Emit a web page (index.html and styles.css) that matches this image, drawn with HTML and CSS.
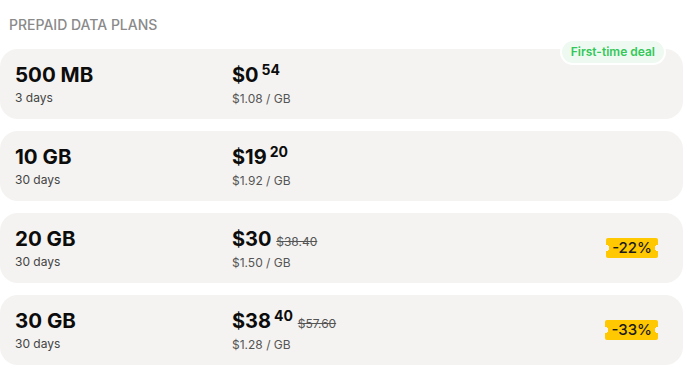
FILE: index.html
```html
<!DOCTYPE html>
<html lang="en">
<head>
  <meta charset="UTF-8">
  <meta name="viewport" content="width=device-width, initial-scale=1.0">
  <title>Prepaid data plans</title>
  <link rel="stylesheet" href="styles.css">
</head>
<body>
  <div class="plans">
    <h2 class="plans-title">Prepaid data plans</h2>

    <div class="plan">
      <div class="plan-size">
        <div class="size">500 MB</div>
        <div class="days">3 days</div>
      </div>
      <div class="plan-price">
        <div class="price">$0<sup>54</sup></div>
        <div class="per-gb">$1.08 / GB</div>
      </div>
      <span class="deal">First-time deal</span>
    </div>

    <div class="plan">
      <div class="plan-size">
        <div class="size">10 GB</div>
        <div class="days">30 days</div>
      </div>
      <div class="plan-price">
        <div class="price">$19<sup>20</sup></div>
        <div class="per-gb">$1.92 / GB</div>
      </div>
    </div>

    <div class="plan">
      <div class="plan-size">
        <div class="size">20 GB</div>
        <div class="days">30 days</div>
      </div>
      <div class="plan-price">
        <div class="price">$30 <s>$38.40</s></div>
        <div class="per-gb">$1.50 / GB</div>
      </div>
      <div class="discount">-22%</div>
    </div>

    <div class="plan">
      <div class="plan-size">
        <div class="size">30 GB</div>
        <div class="days">30 days</div>
      </div>
      <div class="plan-price">
        <div class="price">$38<sup>40</sup> <s>$57.60</s></div>
        <div class="per-gb">$1.28 / GB</div>
      </div>
      <div class="discount">-33%</div>
    </div>
  </div>
</body>
</html>
```

FILE: styles.css
```css
body {
  font-family: Inter, 'Noto Sans', sans-serif;
  background-color: white;
  color: #111;
  margin: 0;
  padding: 0;
}
.plans {
  padding: 16px 12px 0 0;
}
.plans-title {
  margin: 0 0 16px 9px;
  font-size: 14px;
  font-weight: 500;
  line-height: 17px;
  text-transform: uppercase;
  color: #8a8a8a;
}
.plan {
  position: relative;
  display: grid;
  grid-template-columns: 217px 1fr auto;
  align-items: center;
  height: 70px;
  padding: 0 25px 0 15px;
  margin-bottom: 12px;
  background-color: #f4f3f1;
  border-radius: 18px;
  box-sizing: border-box;
}
.size {
  font-size: 20.5px;
  font-weight: 700;
  line-height: 22px;
  color: #0c0c0c;
}
.days {
  margin-top: 4px;
  font-size: 12px;
  line-height: 15px;
  color: #444;
}
.plan-price {
  padding-top: 2px;
}
.price {
  font-size: 20px;
  font-weight: 700;
  line-height: 22px;
  color: #0c0c0c;
}
.price sup {
  font-size: 14px;
  line-height: 0;
  vertical-align: 7px;
  margin-left: 3px;
}
.price s {
  font-size: 12px;
  font-weight: 400;
  line-height: 0;
  color: #555;
}
.per-gb {
  margin-top: 5px;
  font-size: 12px;
  line-height: 15px;
  color: #555;
}
.deal {
  position: absolute;
  top: -10px;
  right: 17px;
  padding: 3px 9px;
  font-size: 12px;
  font-weight: 600;
  line-height: 16px;
  color: #34c759;
  background-color: #eefaf1;
  border: 2px solid white;
  border-radius: 14px;
}
.discount {
  padding: 2px 6px;
  font-size: 15px;
  font-weight: 500;
  line-height: 16px;
  color: #1a1a1a;
  background:
    radial-gradient(circle at 0 50%, #f4f3f1 3px, transparent 3.5px),
    radial-gradient(circle at 100% 50%, #f4f3f1 3px, transparent 3.5px),
    #ffc800;
  border-radius: 2px;
}
```
